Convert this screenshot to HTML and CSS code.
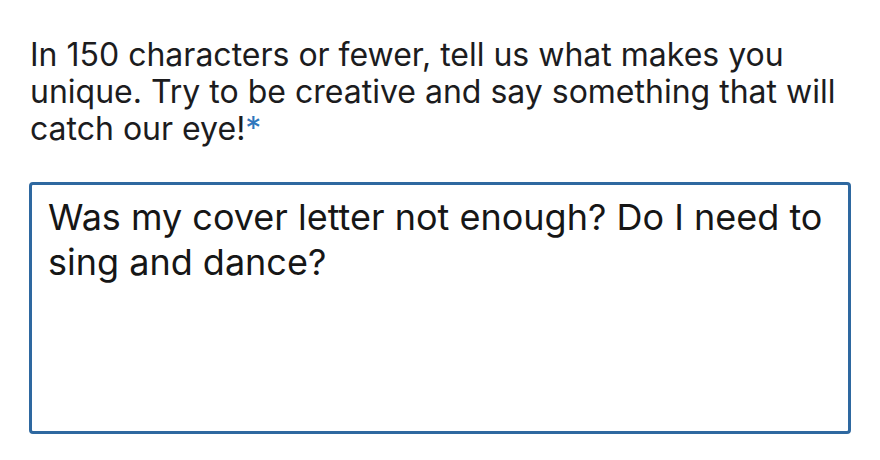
FILE: index.html
```html
<!DOCTYPE html>
<html lang="en">
<head>
    <meta charset="UTF-8">
    <meta name="viewport" content="width=device-width, initial-scale=1.0">
    <title>Question</title>

    <link rel="stylesheet" href="styles.css">
</head>
<body>

    <div class="question">
        <p class="label">In 150 characters or fewer, tell us what makes you unique. Try to be creative and say something that will catch our eye!<span class="required">*</span></p>

        <div class="answer">Was my cover letter not enough? Do I need to sing and dance?</div>
    </div>

</body>
</html>
```

FILE: styles.css
```css
/* CSS styles */
body {
    margin: 0;
    background-color: #ffffff;
    font-family: Inter, "Liberation Sans", sans-serif;
    color: #1c1c1e;
}

.question {
    padding: 36px 29px 0 29px;
    width: 822px;
}

.label {
    margin: 0 0 0 1px;
    font-size: 32px;
    line-height: 37px;
}

.required {
    color: #2f77bd;
}

.answer {
    box-sizing: border-box;
    margin-top: 35px;
    height: 252px;
    border: 3px solid #2e68a0;
    border-radius: 4px;
    padding: 10px 16px;
    font-size: 36px;
    line-height: 45px;
    color: #161616;
}
```
